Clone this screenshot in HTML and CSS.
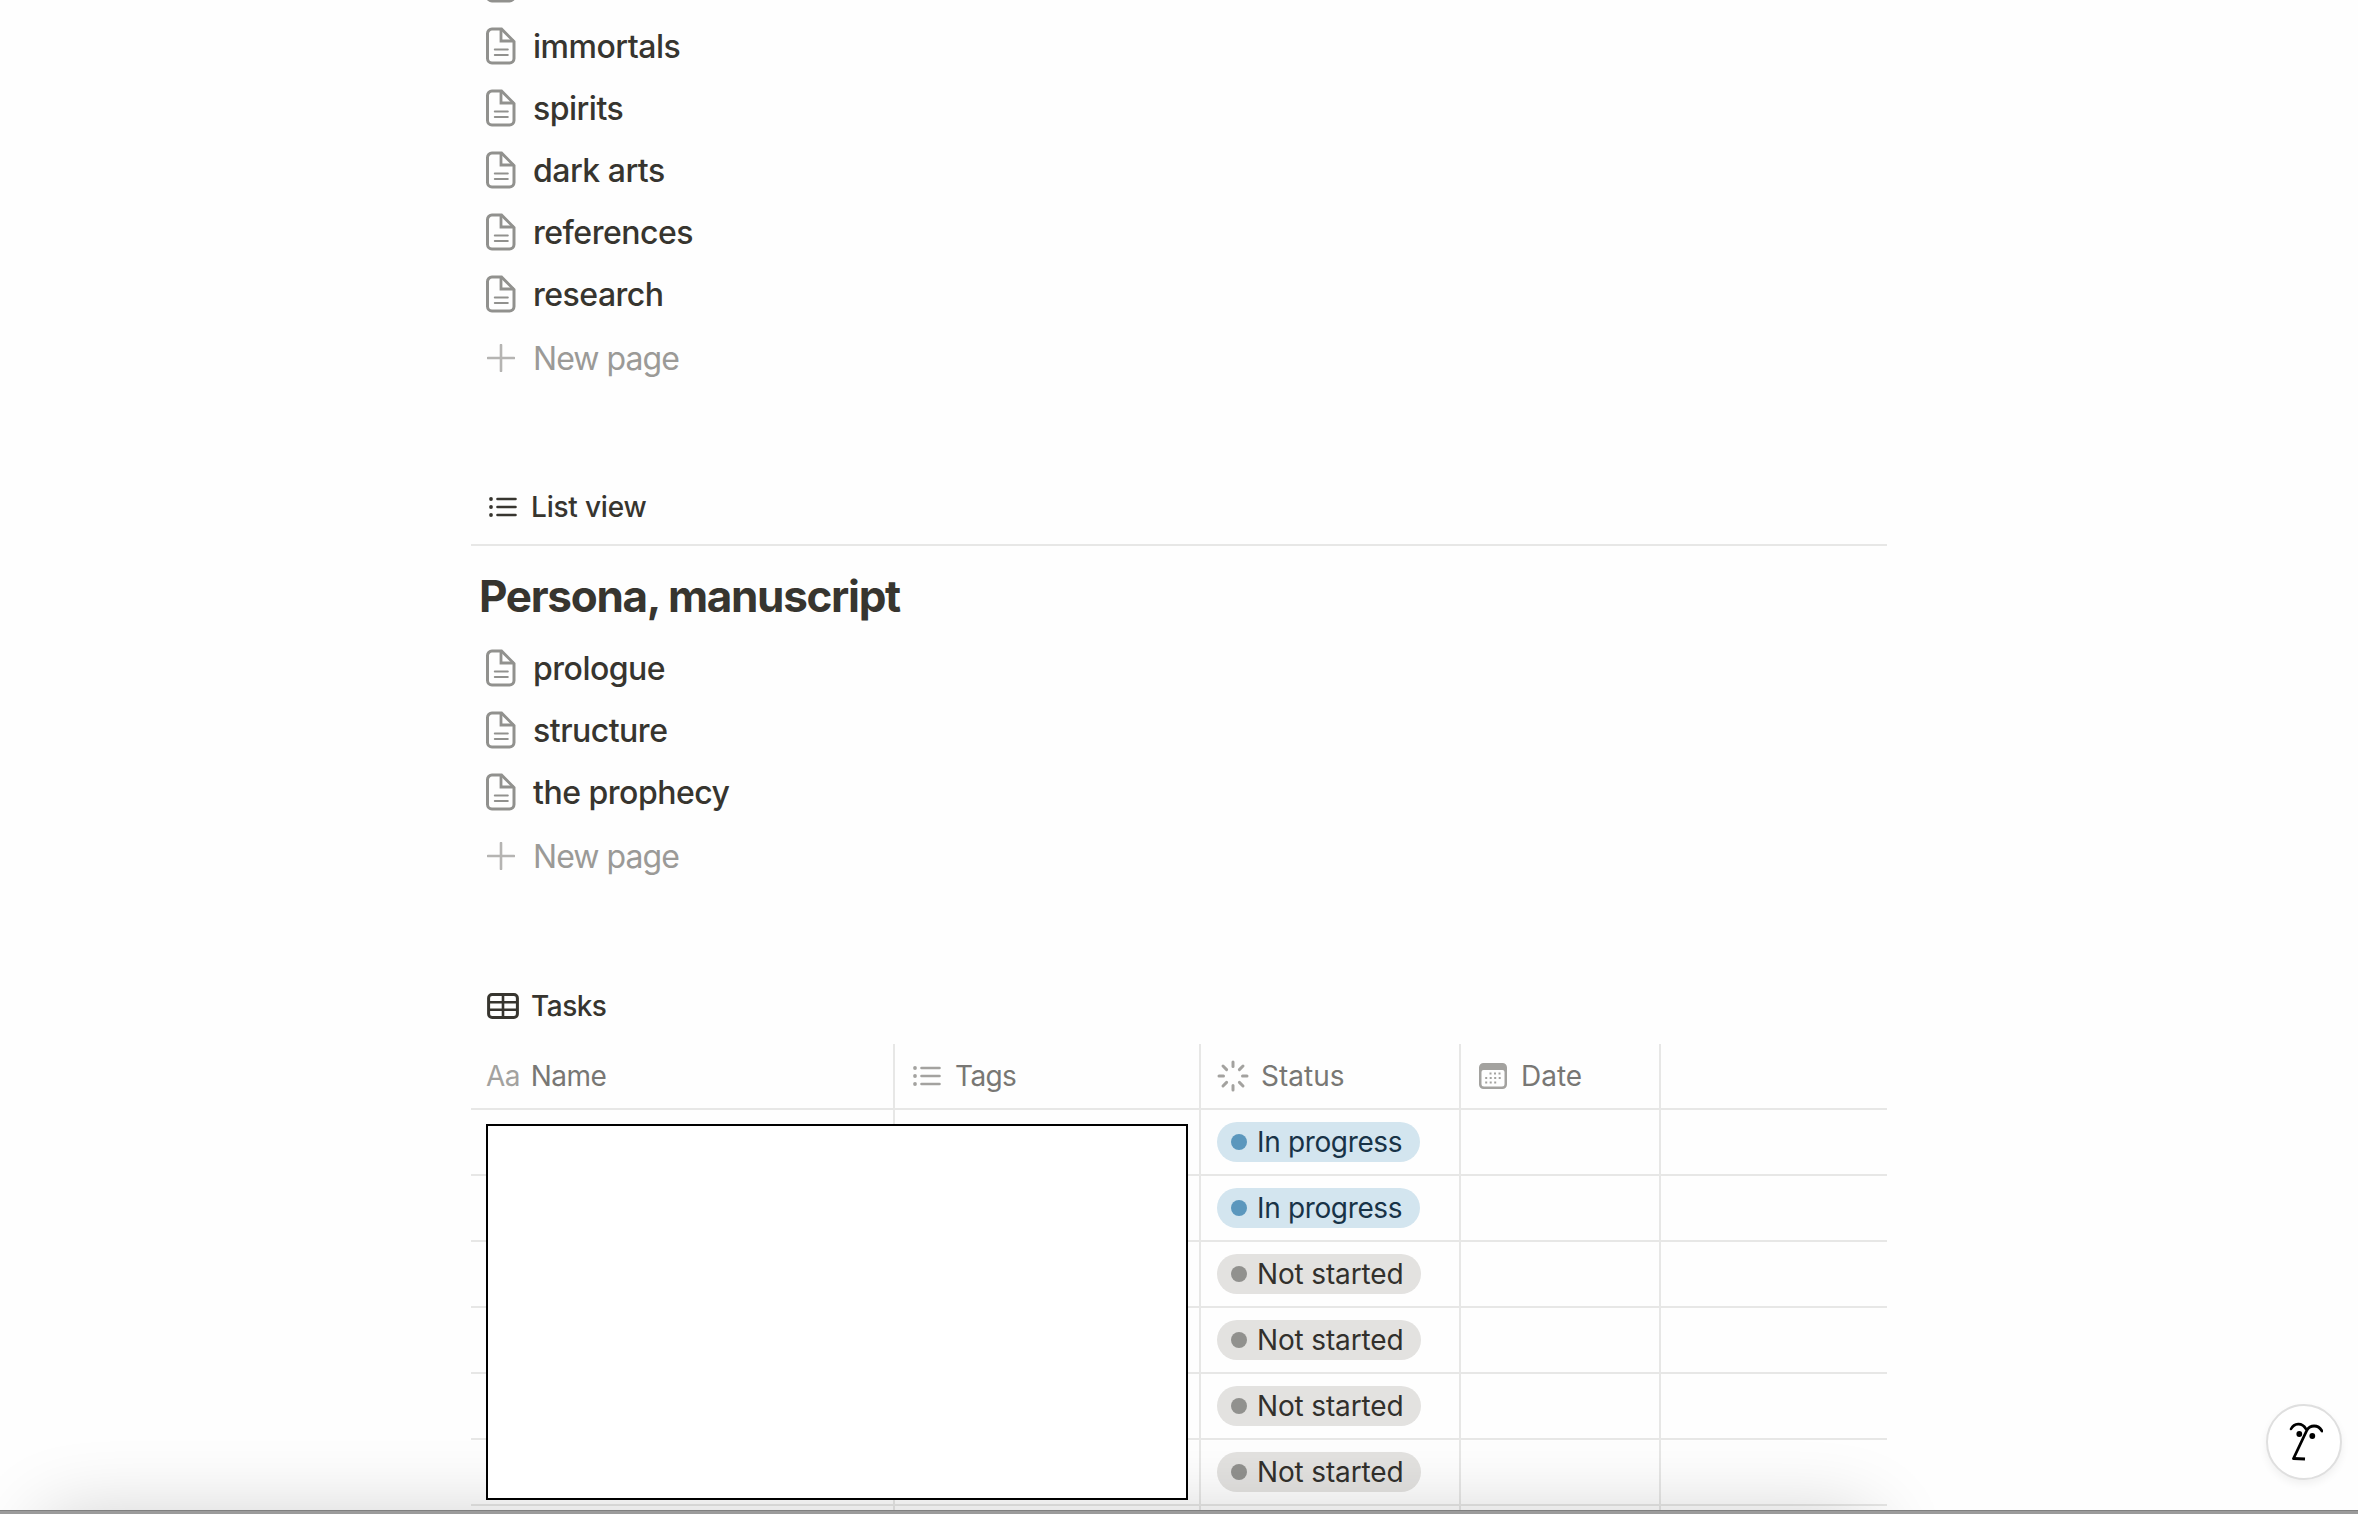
FILE: index.html
```html
<!DOCTYPE html>
<html lang="en">
<head>
    <meta charset="UTF-8">
    <title>Persona, manuscript</title>
    <link rel="stylesheet" href="styles.css">
</head>
<body>
    <svg class="symbols" width="0" height="0">
        <symbol id="page" viewBox="0 0 30 38">
            <path d="M6 2h9.500l12.500 12.500V31.500a4.500 4.500 0 0 1-4.500 4.500H6a4.500 4.500 0 0 1-4.500-4.500V6.500A4.500 4.500 0 0 1 6 2z" fill="none" stroke="currentColor" stroke-width="3"/>
            <path d="M15 2v12h13" fill="none" stroke="currentColor" stroke-width="2.800"/>
            <path d="M8.800 22.500h13M8.800 28h13" stroke="currentColor" stroke-width="2" stroke-linecap="round"/>
        </symbol>
        <symbol id="plus" viewBox="0 0 28 28">
            <path d="M14 1v26M1 14h26" stroke="currentColor" stroke-width="2.600" stroke-linecap="round"/>
        </symbol>
        <symbol id="list" viewBox="0 0 28 22">
            <path d="M8.500 3h18M8.500 11h18M8.500 19h18" stroke="currentColor" stroke-width="2.600" stroke-linecap="round"/>
            <circle cx="2" cy="3" r="1.900" fill="currentColor"/>
            <circle cx="2" cy="11" r="1.900" fill="currentColor"/>
            <circle cx="2" cy="19" r="1.900" fill="currentColor"/>
        </symbol>
    </svg>

    <main>
        <ul class="pages first">
            <li><svg><use href="#page"/></svg></li>
            <li><svg><use href="#page"/></svg><span>immortals</span></li>
            <li><svg><use href="#page"/></svg><span>spirits</span></li>
            <li><svg><use href="#page"/></svg><span>dark arts</span></li>
            <li><svg><use href="#page"/></svg><span>references</span></li>
            <li><svg><use href="#page"/></svg><span>research</span></li>
            <li class="new"><svg><use href="#plus"/></svg><span>New page</span></li>
        </ul>

        <div class="view-tab bordered">
            <svg class="tab-list"><use href="#list"/></svg><span>List view</span>
        </div>
        <h2>Persona, manuscript</h2>
        <ul class="pages">
            <li><svg><use href="#page"/></svg><span>prologue</span></li>
            <li><svg><use href="#page"/></svg><span>structure</span></li>
            <li><svg><use href="#page"/></svg><span>the prophecy</span></li>
            <li class="new"><svg><use href="#plus"/></svg><span>New page</span></li>
        </ul>

        <div class="view-tab tasks">
            <svg class="tab-table" viewBox="0 0 32 26">
                <rect x="1.600" y="1.600" width="28.800" height="22.800" rx="3.500" fill="none" stroke="currentColor" stroke-width="3"/>
                <path d="M16 2v22M2 9.300h28M2 16.700h28" stroke="currentColor" stroke-width="2.600"/>
            </svg><span>Tasks</span>
        </div>
        <div class="table-wrap">
            <div class="row head">
                <div class="cell tight"><span class="aa">Aa</span>Name</div>
                <div class="cell tight"><svg class="i-tags"><use href="#list"/></svg>Tags</div>
                <div class="cell">
                    <svg class="i-status" viewBox="0 0 32 32">
                        <path d="M16 2v4.500M16 25.500v4.500M2 16h4.500M25.500 16h4.500M6 6l3.600 3.600M22.400 22.400L26 26M6 26l3.600-3.600M22.400 9.600L26 6" stroke="currentColor" stroke-width="3" stroke-linecap="round"/>
                    </svg>Status
                </div>
                <div class="cell">
                    <svg class="i-date" viewBox="0 0 28 26">
                        <path fill-rule="evenodd" d="M4.500 0h19A4.500 4.500 0 0 1 28 4.500v17a4.500 4.500 0 0 1-4.500 4.500h-19A4.500 4.500 0 0 1 0 21.500v-17A4.500 4.500 0 0 1 4.500 0zM4.500 7a2 2 0 0 0-2 2v12a2.500 2.500 0 0 0 2.500 2.500h18a2.500 2.500 0 0 0 2.500-2.500V9a2 2 0 0 0-2-2z" fill="currentColor"/>
                        <path d="M10.500 10.500h12M6.200 15h16.500M6.200 19.500h12" stroke="currentColor" stroke-width="2" stroke-dasharray="2 2.500"/>
                    </svg>Date
                </div>
                <div class="cell"></div>
            </div>
            <div class="row"><div class="cell"></div><div class="cell"></div><div class="cell"><span class="pill blue">In progress</span></div><div class="cell"></div><div class="cell"></div></div>
            <div class="row"><div class="cell"></div><div class="cell"></div><div class="cell"><span class="pill blue">In progress</span></div><div class="cell"></div><div class="cell"></div></div>
            <div class="row"><div class="cell"></div><div class="cell"></div><div class="cell"><span class="pill">Not started</span></div><div class="cell"></div><div class="cell"></div></div>
            <div class="row"><div class="cell"></div><div class="cell"></div><div class="cell"><span class="pill">Not started</span></div><div class="cell"></div><div class="cell"></div></div>
            <div class="row"><div class="cell"></div><div class="cell"></div><div class="cell"><span class="pill">Not started</span></div><div class="cell"></div><div class="cell"></div></div>
            <div class="row"><div class="cell"></div><div class="cell"></div><div class="cell"><span class="pill">Not started</span></div><div class="cell"></div><div class="cell"></div></div>
            <div class="row last"><div class="cell"></div><div class="cell"></div><div class="cell"></div><div class="cell"></div><div class="cell"></div></div>
            <div class="cover"></div>
        </div>
    </main>

    <div class="shade"></div>
    <div class="edge"></div>
    <button class="assistant" aria-label="Assistant">
        <svg viewBox="0 0 34 40" fill="none" stroke="#000" stroke-linecap="round" stroke-linejoin="round">
            <path d="M2 7C5 1 13 0 17 7" stroke-width="2.600"/>
            <path d="M33 9C29 2 21 3 18 8L4.500 36.500" stroke-width="2.800"/>
            <path d="M4.500 36.500l11.500.5" stroke-width="3.200" stroke-linecap="butt"/>
            <circle cx="10.300" cy="12" r="2.900" fill="#000" stroke="none"/>
            <circle cx="23.300" cy="14" r="2.900" fill="#000" stroke="none"/>
        </svg>
    </button>
</body>
</html>
```
FILE: styles.css
```css
* {
    box-sizing: border-box;
}
html {
    overflow: hidden;
}
body {
    margin: 0;
    height: 1514px;
    overflow: hidden;
    position: relative;
    background: #fefefe;
    color: #37352f;
    font-family: Inter, "Liberation Sans", sans-serif;
}
main {
    width: 1416px;
    margin-left: 471px;
}
.symbols {
    display: block;
}
.pages {
    list-style: none;
    margin: 0;
    padding: 0;
}
.pages.first {
    margin-top: -47px;
}
.pages li {
    display: flex;
    align-items: center;
    height: 62px;
    padding-left: 15px;
    gap: 17px;
    font-size: 32px;
    font-weight: 500;
    letter-spacing: -0.5px;
}
.pages svg {
    width: 30px;
    height: 38px;
    color: #91918e;
}
.pages .new {
    height: 66px;
    font-weight: 400;
    letter-spacing: -0.95px;
    color: #9b9a97;
}
.pages .new svg {
    width: 28px;
    height: 28px;
    margin: 0 1px;
    color: #b5b4b2;
}
.view-tab {
    display: flex;
    align-items: center;
    height: 76px;
    margin-top: 79px;
    padding-left: 18px;
    font-size: 28px;
    font-weight: 500;
    letter-spacing: -0.2px;
}
.bordered {
    border-bottom: 2px solid #e7e7e6;
}
.tab-list {
    width: 28px;
    height: 22px;
    margin-right: 14px;
}
.tasks {
    padding-left: 16px;
    letter-spacing: -0.5px;
}
.tab-table {
    width: 32px;
    height: 26px;
    margin-right: 12px;
}
h2 {
    margin: 23px 0 14px;
    padding-left: 8px;
    font-size: 44px;
    line-height: 54px;
    font-weight: 700;
    letter-spacing: -1.3px;
}
.table-wrap {
    position: relative;
}
.row {
    display: grid;
    grid-template-columns: 424px 306px 260px 200px 226px;
    height: 66px;
    border-bottom: 2px solid #e7e7e6;
}
.row.last {
    height: 4px;
    border-bottom: none;
}
.cell {
    display: flex;
    align-items: center;
    padding-left: 16px;
    border-right: 2px solid #e7e7e6;
}
.cell:last-child {
    border-right: none;
}
.head {
    color: #787774;
    font-size: 28px;
}
.tight {
    letter-spacing: -0.6px;
}
.head svg,
.aa {
    color: #a3a29f;
}
.aa {
    margin-left: -1px;
    margin-right: 11px;
}
.i-tags {
    width: 28px;
    height: 22px;
    margin: 0 14px 0 2px;
}
.i-status {
    width: 32px;
    height: 32px;
    margin-right: 12px;
}
.i-date {
    width: 28px;
    height: 26px;
    margin: 0 14px 0 2px;
}
.pill {
    display: flex;
    align-items: center;
    height: 40px;
    padding: 0 18px 0 14px;
    border-radius: 20px;
    background: #e3e2e0;
    color: #32302c;
    font-size: 28px;
    letter-spacing: -0.15px;
}
.pill::before {
    content: "";
    width: 16px;
    height: 16px;
    margin-right: 10px;
    border-radius: 50%;
    background: #91918e;
}
.pill.blue {
    background: #d3e5ef;
    color: #183347;
    letter-spacing: -0.35px;
}
.pill.blue::before {
    background: #5b97bd;
}
.cover {
    position: absolute;
    z-index: 2;
    left: 15px;
    top: 80px;
    width: 702px;
    height: 376px;
    background: #fff;
    border: 2px solid #000;
}
.shade {
    position: absolute;
    left: 55px;
    top: 1528px;
    width: 1805px;
    height: 100px;
    box-shadow: 0 0 80px 10px rgba(0, 0, 0, 0.2);
}
.edge {
    position: absolute;
    left: 0;
    bottom: 0;
    width: 100%;
    height: 4px;
    background: #9b9b9b;
    border-top: 1px solid #808080;
}
.assistant {
    position: absolute;
    left: 2266px;
    top: 1404px;
    width: 76px;
    height: 76px;
    padding: 0;
    border: 2px solid #dfdfdf;
    border-radius: 50%;
    background: #fff;
    box-shadow: 0 4px 8px rgba(0, 0, 0, 0.06);
}
.assistant svg {
    display: block;
    width: 34px;
    height: 40px;
    margin-left: 21px;
}
```
